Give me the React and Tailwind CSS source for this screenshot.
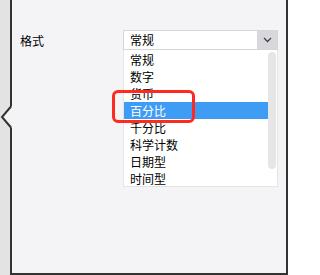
import { useState } from 'react'

const FORMATS = ['常规', '数字', '货币', '百分比', '千分比', '科学计数', '日期型', '时间型']

function Chevron() {
  return (
    <svg width="9" height="6" viewBox="0 0 9 6" className="block">
      <path d="M1 1l3.5 3.5L8 1" fill="none" stroke="#444" strokeWidth="1.3" />
    </svg>
  )
}

export default function App() {
  const [value] = useState('常规')
  const active = '百分比'

  return (
    <div
      className="relative flex h-[275px] w-[288px] overflow-hidden bg-[#e3e3e3] text-[12px] text-black"
      style={{ fontFamily: '"Noto Sans CJK SC", "Noto Sans", sans-serif' }}
    >
      <div className="w-[10px] shrink-0" />
      <div className="flex flex-1 items-start border-b-2 border-l-2 border-r-2 border-[#333] bg-[#f4f4f6] pl-2 pr-2 pt-[30px]">
        <span className="mt-[1px] flex-1 leading-[20px]">格式</span>
        <div className="w-[155px]">
          <div className="flex h-[20px] border border-[#d6d6d6] bg-white">
            <span className="flex-1 pl-[6px] leading-[18px]">{value}</span>
            <span className="flex w-[20px] items-center justify-center bg-[#d8d8dc]">
              <Chevron />
            </span>
          </div>
          <div className="flex h-[137px] border border-t-0 border-[#e4e4e4] bg-white">
            <ul className="w-[144px] pt-[1px]">
              {FORMATS.map((f) => (
                <li
                  key={f}
                  className={
                    f === active
                      ? 'h-[17px] bg-[#3f9cf4] pl-[6px] leading-[17px] text-white'
                      : 'h-[17px] pl-[6px] leading-[17px]'
                  }
                >
                  {f}
                </li>
              ))}
            </ul>
            <div className="mt-[2px] h-[117px] w-[8px] rounded-full bg-[#e6e6e6]" />
          </div>
        </div>
      </div>

      <svg
        className="absolute left-0 top-[104px]"
        width="14"
        height="26"
        viewBox="0 0 14 26"
      >
        <polygon points="12,2 1.5,13 12,24" fill="#f4f4f6" />
        <polyline points="11,2.5 2,13 11,23.5" fill="none" stroke="#333" strokeWidth="2" />
      </svg>

      <div className="absolute left-[112px] top-[90px] h-[33px] w-[83px] rounded-[6px] border-[3px] border-[#ff2a1f]" />
    </div>
  )
}
